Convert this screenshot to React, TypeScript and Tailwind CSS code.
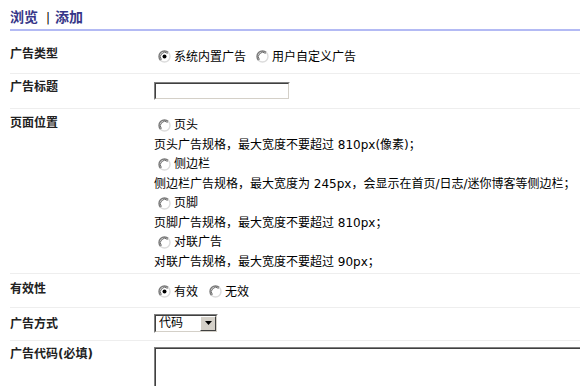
import React from "react";

function Radio({ checked = false }: { checked?: boolean }) {
  return (
    <svg width="13" height="13" viewBox="0 0 13 13" className="shrink-0">
      <circle cx="6.5" cy="6.5" r="5.5" fill="#ffffff" />
      <path d="M2.61 10.39 A5.5 5.5 0 0 1 10.39 2.61" fill="none" stroke="#7a7a7a" strokeWidth="1.4" />
      <path d="M10.39 2.61 A5.5 5.5 0 0 1 2.61 10.39" fill="none" stroke="#dcdcdc" strokeWidth="1.4" />
      <path d="M3.4 9.6 A4.4 4.4 0 0 1 9.6 3.4" fill="none" stroke="#404040" strokeWidth="0.8" />
      {checked && <circle cx="6.5" cy="6.5" r="2" fill="#000000" />}
    </svg>
  );
}

function RadioItem({ label, checked = false, className = "" }: { label: string; checked?: boolean; className?: string }) {
  return (
    <div className={"flex items-center " + className}>
      <span className="ml-[4px] mr-[3px] flex">
        <Radio checked={checked} />
      </span>
      <span>{label}</span>
    </div>
  );
}

function Inset({ className = "", children }: { className?: string; children?: React.ReactNode }) {
  return (
    <div className={"border border-t-[#808080] border-l-[#808080] border-r-white border-b-white " + className}>
      <div className="w-full h-full border border-t-[#404040] border-l-[#404040] border-r-[#d4d0c8] border-b-[#d4d0c8] bg-white">
        {children}
      </div>
    </div>
  );
}

export default function App() {
  const label = "w-[144px] shrink-0 font-bold text-[#222222] leading-[18px] self-start";
  return (
    <div className="w-[580px] h-[386px] overflow-hidden bg-white text-[12px] text-black font-['DejaVu_Sans','Noto_Sans_CJK_SC',sans-serif]">
      <div className="pl-[10px] pt-[6px]">
        <div className="flex items-center h-[23px] text-[14px] font-bold text-[#363688]">
          <span>浏览</span>
          <span className="font-normal text-black text-[12px] ml-[8px] mr-[5px]">|</span>
          <span>添加</span>
        </div>
      </div>
      <div className="ml-[10px] h-[2px] bg-[#b3baf4]" />
      <div className="ml-[10px] mt-[9px]">
        <div className="flex h-[34px] border-b border-[#eeeeee]">
          <div className={label + " pt-[5px]"}>广告类型</div>
          <div className="flex items-center self-center leading-[18px]">
            <RadioItem label="系统内置广告" checked />
            <RadioItem label="用户自定义广告" className="ml-[6px]" />
          </div>
        </div>
        <div className="flex h-[35px] border-b border-[#eeeeee]">
          <div className={label + " pt-[4px]"}>广告标题</div>
          <div className="self-center">
            <Inset className="w-[136px] h-[18px]" />
          </div>
        </div>
        <div className="flex h-[165px] border-b border-[#eeeeee]">
          <div className={label + " pt-[5px]"}>页面位置</div>
          <div className="flex flex-col self-start pt-[6px]">
            <div className="h-[20px] flex items-center"><RadioItem label="页头" /></div>
            <div className="h-[19px] flex items-center">页头广告规格，最大宽度不要超过 810px(像素)；</div>
            <div className="h-[20px] flex items-center"><RadioItem label="侧边栏" /></div>
            <div className="h-[19px] flex items-center">侧边栏广告规格，最大宽度为 245px，会显示在首页/日志/迷你博客等侧边栏；</div>
            <div className="h-[20px] flex items-center"><RadioItem label="页脚" /></div>
            <div className="h-[19px] flex items-center">页脚广告规格，最大宽度不要超过 810px；</div>
            <div className="h-[20px] flex items-center"><RadioItem label="对联广告" /></div>
            <div className="h-[19px] flex items-center">对联广告规格，最大宽度不要超过 90px；</div>
          </div>
        </div>
        <div className="flex h-[34px] border-b border-[#eeeeee]">
          <div className={label + " pt-[6px]"}>有效性</div>
          <div className="flex items-center self-center leading-[18px] pt-[2px]">
            <RadioItem label="有效" checked />
            <RadioItem label="无效" className="ml-[7px]" />
          </div>
        </div>
        <div className="flex h-[33px] border-b border-[#eeeeee]">
          <div className={label + " pt-[7px]"}>广告方式</div>
          <div className="self-center pb-[2px]">
            <Inset className="w-[64px] h-[19px]">
              <div className="flex items-center h-full justify-between">
                <span className="pl-[3px] leading-[15px]">代码</span>
                <div className="w-[16px] h-[15px] bg-[#d4d0c8] border border-t-white border-l-white border-r-[#404040] border-b-[#404040] flex items-center justify-center">
                  <svg width="7" height="4" viewBox="0 0 7 4"><path d="M0 0 H7 L3.5 4 Z" fill="#000" /></svg>
                </div>
              </div>
            </Inset>
          </div>
        </div>
        <div className="flex">
          <div className={label + " pt-[4px]"}>广告代码(必填)</div>
          <div className="pt-[6px]">
            <Inset className="w-[440px] h-[80px]" />
          </div>
        </div>
      </div>
    </div>
  );
}
